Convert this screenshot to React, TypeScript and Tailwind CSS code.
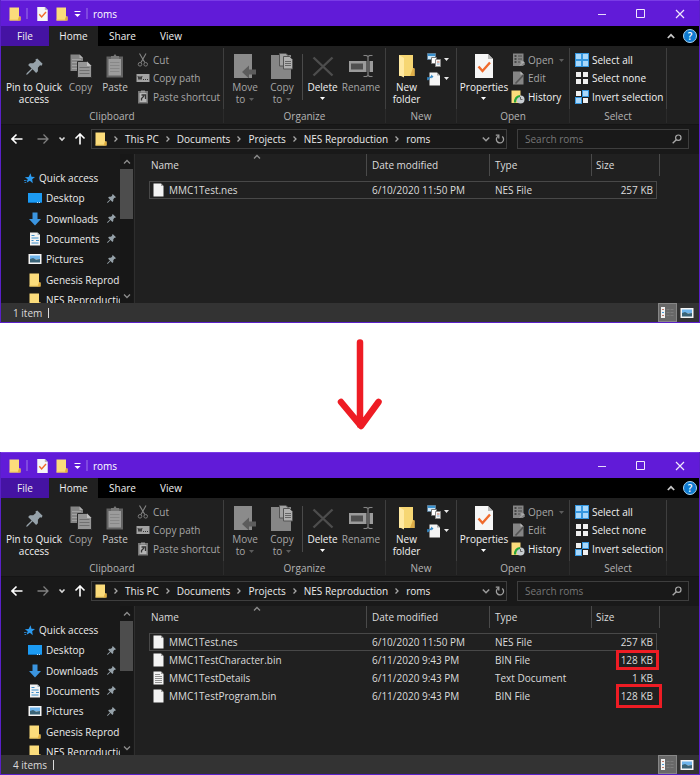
import React from "react";

type IconProps = { className?: string };

function Svg({ w, h, className, children }: { w: number; h: number; className?: string; children: React.ReactNode }) {
  return (
    <svg width={w} height={h} viewBox={`0 0 ${w} ${h}`} fill="none" aria-hidden="true" className={`block shrink-0 ${className ?? ""}`}>
      {children}
    </svg>
  );
}

/* ---------- shared icons ---------- */

function Pin({ size }: { size: number }) {
  return (
    <svg width={size} height={size} viewBox="0 0 16 16" aria-hidden="true" className="block shrink-0">
      <path
        d="M10.600 0.400 15.600 5.400 14.600 7.200 13.200 6.800 11.200 9.200 11.200 12.400 9.500 14 6.200 10.700 1.600 15.400 0.300 15.900 0.600 14.400 5.300 9.800 2 6.500 3.600 4.900 6.800 4.900 9.300 2.900 8.900 1.500Z"
        fill="#96a2aa"
      />
    </svg>
  );
}

function Folder({ className }: IconProps) {
  return (
    <Svg w={12} h={14} className={className}>
      <path d="M0.500 0.500H10v9h1.500v4H0.500Z" fill="#fbdc7b" />
      <path d="M10 9.500h1.500v4h-3Z" fill="#e0ac3d" />
      <path d="M0.500 12.500h9v1h-9Z" fill="#ecc65c" />
    </Svg>
  );
}

function CheckedPage({ w, h }: { w: number; h: number }) {
  return (
    <svg width={w} height={h} viewBox="0 0 18 24" fill="none" aria-hidden="true" className="block shrink-0">
      <path d="M0 0H13L18 5V24H0Z" fill="#f6f6f6" />
      <path d="M13 0 18 5H13Z" fill="#b9b9b9" />
      <path d="M3.500 12.500 7.500 17 15 8.500" stroke="#ef6a2c" strokeWidth="2.400" />
    </svg>
  );
}

function Caret({ className }: IconProps) {
  return (
    <Svg w={5} h={3} className={className}>
      <path d="M0 0H5L2.500 3Z" fill="currentColor" />
    </Svg>
  );
}

function Chevron({ dir, className }: { dir: "up" | "down" | "right"; className?: string }) {
  const d = dir === "up" ? "M1 5.500 4 2.500 7 5.500" : dir === "down" ? "M1 2.500 4 5.500 7 2.500" : "M2.500 1.500 5 4 2.500 6.500";
  return (
    <Svg w={8} h={8} className={className}>
      <path d={d} stroke="currentColor" strokeWidth="1.300" />
    </Svg>
  );
}

/* ---------- ribbon icons ---------- */

function CopyIcon() {
  return (
    <Svg w={22} h={24}>
      <path d="M0.500 0.500H9.500L13 4V17H0.500Z" fill="#858585" />
      <path d="M9.500 0.500V4H13Z" fill="#b0b0b0" />
      <path d="M2 5.500h9M2 8.500h9M2 11.500h9M2 14.500h9" stroke="#a2a2a2" />
      <path d="M7.500 7.500H17L21.500 12V23.500H7.500Z" fill="#969696" stroke="#2c2c2c" />
      <path d="M17 7.500V12H21.500Z" fill="#c2c2c2" />
      <path d="M9.500 13.500h10M9.500 16.500h10M9.500 19.500h10" stroke="#707070" />
    </Svg>
  );
}

function PasteIcon() {
  return (
    <Svg w={18} h={24}>
      <path d="M0.500 2.500h16.500v21H0.500Z" fill="#636363" />
      <path d="M2.500 5h12.500v16.500H2.500Z" fill="#9c9c9c" />
      <path d="M5 2h2.500L9 0l1.500 2H13v3H5Z" fill="#787878" />
      <path d="M4 8.500h9.500M4 11.500h9.500M4 14.500h9.500M4 17.500h9.500" stroke="#888" />
    </Svg>
  );
}

function CutIcon() {
  return (
    <Svg w={14} h={14}>
      <path d="M3.500 0.500 8.800 9.500M10 0.500 5 9.500" stroke="#858585" strokeWidth="1.100" />
      <circle cx="4" cy="11.300" r="1.800" stroke="#7b7b7b" />
      <circle cx="9.700" cy="11.300" r="1.800" stroke="#7b7b7b" />
    </Svg>
  );
}

function CopyPathIcon() {
  return (
    <Svg w={14} h={14}>
      <path d="M0.500 3h13v8H0.500Z" fill="#a3a3a3" />
      <path d="M2 5l1 3.500L4 5.500l1 3L6 5" stroke="#333" />
      <path d="M7 8.500h1M9 8.500h1M11 8.500h1" stroke="#333" />
    </Svg>
  );
}

function ShortcutIcon() {
  return (
    <Svg w={14} h={14}>
      <path d="M2 1h10v12.500H2Z" fill="#777" />
      <path d="M3.500 3h7v9h-7Z" fill="#b5b5b5" />
      <path d="M5 0.500h4v2H5Z" fill="#999" />
      <path d="M5.500 10.500V8.500L8 6M5.500 5h4v4" stroke="#333" strokeWidth="1.300" />
    </Svg>
  );
}

function MoveToIcon() {
  return (
    <Svg w={22} h={24}>
      <path d="M0 0h18v24H0Z" fill="#8b8b8b" />
      <path d="M8 18 15 11.500v4h7v5h-7v4Z" fill="#5c5c5c" />
    </Svg>
  );
}

function CopyToIcon() {
  return (
    <Svg w={22} h={26}>
      <path d="M0 2h20v24H0Z" fill="#868686" />
      <path d="M8.500 0.500h6.500l2.500 2.500v10h-9Z" fill="#a2a2a2" stroke="#555" />
      <path d="M12.500 3.500h6l3 3v9.500h-9Z" fill="#b0b0b0" stroke="#555" />
      <path d="M14 8.500h6M14 10.500h6M14 12.500h6" stroke="#666" />
    </Svg>
  );
}

function DeleteIcon() {
  return (
    <Svg w={22} h={24}>
      <path d="M1.500 3.500 20.500 21.500M20.500 3.500 1.500 21.500" stroke="#4d4d4d" strokeWidth="2.400" />
    </Svg>
  );
}

function RenameIcon() {
  return (
    <Svg w={24} h={24}>
      <path d="M0 7h24v11H0Z" fill="#9b9b9b" />
      <path d="M2 9.500h12v6H2Z" fill="#505050" />
      <path d="M14.500 1.500h3l1.500 1 1.500-1h3M14.500 22.500h3l1.500-1 1.500 1h3M19 2.500v19" stroke="#222" strokeWidth="3" />
      <path d="M14.500 1.500h3l1.500 1 1.500-1h3M14.500 22.500h3l1.500-1 1.500 1h3M19 2.500v19" stroke="#858585" strokeWidth="1.200" />
    </Svg>
  );
}

function NewFolderIcon() {
  return (
    <Svg w={16} h={24}>
      <path d="M0 1h14v14h1.500v7H0Z" fill="#f6d673" />
      <path d="M0 1l5 3v19.500L0 21Z" fill="#ffe9a2" />
      <path d="M14 14h1.500v8H11Z" fill="#dfae48" />
    </Svg>
  );
}

function NewItemIcon() {
  return (
    <Svg w={14} h={14}>
      <path d="M0.500 0.500h8v6h-8Z" fill="#cfe7f7" stroke="#5d7f99" />
      <path d="M1 1h7v2H1Z" fill="#3b93d0" />
      <path d="M4.500 4.500h5v6h-5Z" fill="#fff" stroke="#777" />
      <path d="M8.500 6.500h5v7h-5Z" fill="#f4f4f4" stroke="#888" />
      <path d="M10 9h2.500" stroke="#c06a52" />
      <path d="M10 11h2.500" stroke="#7aa7c7" />
    </Svg>
  );
}

function EasyAccessIcon() {
  return (
    <Svg w={14} h={14}>
      <path d="M2.500 0.500h7.500L13 3.500V13.500H2.500Z" fill="#f4f4f4" />
      <path d="M10 0.500v3h3Z" fill="#aaa" />
      <path d="M0 6h2.500M0.500 8C2 6 3 5 5 4.500" stroke="#3588c4" strokeWidth="1.300" />
      <path d="M4 2.500 6.500 4.500 4.500 6.500Z" fill="#3588c4" />
    </Svg>
  );
}

function OpenIcon() {
  return (
    <Svg w={14} h={14}>
      <path d="M2 0.500h10.500v12.500H2Z" fill="#858585" />
      <path d="M3.500 3h2M3.500 6h2M3.500 9h2" stroke="#333" strokeWidth="1.600" />
      <path d="M7 3h4M7 6h4M7 9h2" stroke="#4a4a4a" />
      <path d="M9 12.500 12.500 9M10 9h3v3" stroke="#bbb" />
    </Svg>
  );
}

function EditIcon() {
  return (
    <Svg w={14} h={14}>
      <path d="M2 0.500h7.500l3 3v10H2Z" fill="#858585" />
      <path d="M9.500 0.500v3h3Z" fill="#bbb" />
      <path d="M4.500 12.500 12.500 4" stroke="#555" strokeWidth="1.800" />
    </Svg>
  );
}

function HistoryIcon() {
  return (
    <Svg w={14} h={14}>
      <path d="M0.500 0.500h9v8h1v4.500h-10Z" fill="#fbdc7b" />
      <circle cx="9.500" cy="9.500" r="4" fill="#c9ced2" />
      <path d="M9.500 9.500V7M9.500 9.500h2" stroke="#666" />
      <path d="M4 12.500C4 8.500 5.500 6.500 9 6" stroke="#2aa53a" strokeWidth="2.200" />
    </Svg>
  );
}

function TilesIcon({ on }: { on: [boolean, boolean, boolean, boolean] }) {
  const spots = [
    [0, 0],
    [7, 0],
    [0, 7],
    [7, 7],
  ];
  return (
    <Svg w={14} h={14}>
      {spots.map(([x, y], i) =>
        on[i] ? (
          <g key={i}>
            <rect x={x} y={y} width="7" height="7" fill="#3597e0" />
            <rect x={x + 1} y={y + 1} width="5" height="5" fill="#a9d8fb" />
          </g>
        ) : (
          <rect key={i} x={x + 1} y={y + 1} width="5" height="5" fill="#f0f0f0" />
        )
      )}
    </Svg>
  );
}

/* ---------- sidebar icons ---------- */

function StarIcon() {
  return (
    <Svg w={11} h={11}>
      <path d="M6.500 0.300 7.500 3.700 11 4 8.200 6.200 8.800 10.200 5.800 7.700 2.500 9.800 3.700 6.300 0.800 4.300 4.600 3.900Z" fill="#2b9bf0" />
      <path d="M0 7.500h2.500M0.500 9.500h1.500" stroke="#2b77b5" />
    </Svg>
  );
}

function DesktopIcon() {
  return (
    <Svg w={14} h={14}>
      <path d="M0 2h14v10H0Z" fill="#1c9bf3" />
      <path d="M0 11h14v1H0Z" fill="#0e6fba" />
      <path d="M9 11.500h1M11 11.500h1" stroke="#bfe2fb" />
    </Svg>
  );
}

function DownloadIcon() {
  return (
    <Svg w={14} h={14}>
      <path d="M4.500 0.500h5v6.500H13L7 13.500 1 7h3.500Z" fill="#3b95e0" />
    </Svg>
  );
}

function DocumentIcon() {
  return (
    <Svg w={14} h={14}>
      <path d="M2 0.500h7.500l2.500 2.500v10.500H2Z" fill="#f2f2f2" />
      <path d="M3.500 3.500h3M3.500 6h7M3.500 8.500h2M8 8.500h3M3.500 11h7" stroke="#3d8fc9" strokeWidth="1.200" />
      <path d="M9.500 0.500v2.500H12Z" fill="#a5b5c0" />
    </Svg>
  );
}

function PictureIcon() {
  return (
    <Svg w={14} h={12}>
      <path d="M0.500 1h13v10H0.500Z" fill="#f5f5f5" />
      <path d="M2 2.500h10v3.500H2Z" fill="#6fb5ec" />
      <path d="M2 6 5 5l3 1.500 4-0.500v3.500H2Z" fill="#3a6478" />
    </Svg>
  );
}

function FileIcon({ lined }: { lined?: boolean }) {
  return (
    <Svg w={11} h={14}>
      <path d="M0.500 0.500h7.500l2.500 2.500v10.500h-10Z" fill="#f3f3f3" />
      <path d="M8 0.500v2.500h2.500Z" fill="#9d9d9d" />
      {lined && <path d="M2 3.500h5M2 5.500h7M2 7.500h7M2 9.500h7M2 11.500h7" stroke="#909090" />}
    </Svg>
  );
}

/* ---------- ribbon parts ---------- */

function BigButton({ icon, lines, width, tone, caret }: { icon: React.ReactNode; lines: string[]; width: string; tone: string; caret?: "below" | "inline" }) {
  return (
    <button type="button" className={`flex shrink-0 flex-col items-center gap-[3px] pt-1.5 leading-3 ${width} ${tone}`}>
      <span className="flex h-6 items-center justify-center">{icon}</span>
      <span className="flex flex-col items-center whitespace-nowrap">
        {lines.map((line, i) => (
          <span key={line} className="flex items-center gap-1">
            {line}
            {caret === "inline" && i === lines.length - 1 && <Caret className="text-[#5c5c5c]" />}
          </span>
        ))}
        {caret === "below" && <Caret className="mt-1 text-white" />}
      </span>
    </button>
  );
}

function SmallButton({ icon, text, tone, caret }: { icon: React.ReactNode; text: string; tone: string; caret?: boolean }) {
  return (
    <button type="button" className={`flex items-center gap-[3px] whitespace-nowrap ${tone}`}>
      {icon}
      {text}
      {caret && <Caret className="ml-0.5 text-[#5c5c5c]" />}
    </button>
  );
}

function Group({ label, width, children }: { label: string; width: string; children: React.ReactNode }) {
  return (
    <div role="group" aria-label={label} className={`flex shrink-0 flex-col pt-0.5 ${width}`}>
      <div className="flex h-[61px] border-r border-[#3f3f3f]">{children}</div>
      <div className="flex h-[14px] items-center justify-center border-r border-[#2b2b2b] text-[#b4b4b4]">{label}</div>
    </div>
  );
}

function Stack({ children }: { children: React.ReactNode }) {
  return <div className="grid h-[58px] auto-rows-fr pt-[3px]">{children}</div>;
}

function Ribbon() {
  const bright = "text-[#f2f2f2]";
  const dim = "text-[#a6a6a6]";
  return (
    <div className="flex h-[78px] overflow-hidden bg-[#202020]">
      <Group label="Clipboard" width="w-[223px]">
        <BigButton icon={<Pin size={17} />} lines={["Pin to Quick", "access"]} width="w-[66px]" tone={bright} />
        <BigButton icon={<CopyIcon />} lines={["Copy"]} width="w-[27px]" tone={dim} />
        <BigButton icon={<PasteIcon />} lines={["Paste"]} width="w-[42px]" tone="text-[#c8c8c8]" />
        <Stack>
          <SmallButton icon={<CutIcon />} text="Cut" tone={dim} />
          <SmallButton icon={<CopyPathIcon />} text="Copy path" tone={dim} />
          <SmallButton icon={<ShortcutIcon />} text="Paste shortcut" tone={dim} />
        </Stack>
      </Group>
      <Group label="Organize" width="w-[162px]">
        <BigButton icon={<MoveToIcon />} lines={["Move", "to"]} width="w-[42px]" tone={dim} caret="inline" />
        <BigButton icon={<CopyToIcon />} lines={["Copy", "to"]} width="w-[32px]" tone={dim} caret="inline" />
        <span className="mt-1.5 ml-1 h-[46px] w-px bg-[#4a4a4a]" />
        <BigButton icon={<DeleteIcon />} lines={["Delete"]} width="w-[39px]" tone={bright} caret="below" />
        <BigButton icon={<RenameIcon />} lines={["Rename"]} width="w-[38px]" tone={dim} />
      </Group>
      <Group label="New" width="w-[71px]">
        <BigButton icon={<NewFolderIcon />} lines={["New", "folder"]} width="w-[41px]" tone={bright} />
        <div className="flex flex-col gap-1 pt-1 text-[#e8e8e8]">
          <button type="button" aria-label="New item" className="flex h-[15px] items-center gap-[3px]">
            <NewItemIcon />
            <Caret />
          </button>
          <button type="button" aria-label="Easy access" className="flex h-[15px] items-center gap-[3px]">
            <EasyAccessIcon />
            <Caret />
          </button>
        </div>
      </Group>
      <Group label="Open" width="w-[113px]">
        <BigButton icon={<CheckedPage w={18} h={24} />} lines={["Properties"]} width="w-[54px]" tone={bright} caret="below" />
        <Stack>
          <SmallButton icon={<OpenIcon />} text="Open" tone={dim} caret />
          <SmallButton icon={<EditIcon />} text="Edit" tone={dim} />
          <SmallButton icon={<HistoryIcon />} text="History" tone={bright} />
        </Stack>
      </Group>
      <Group label="Select" width="w-[97px]">
        <div className="pl-[5px]">
          <Stack>
            <SmallButton icon={<TilesIcon on={[true, true, true, true]} />} text="Select all" tone={bright} />
            <SmallButton icon={<TilesIcon on={[false, false, false, false]} />} text="Select none" tone={bright} />
            <SmallButton icon={<TilesIcon on={[false, true, true, false]} />} text="Invert selection" tone={bright} />
          </Stack>
        </div>
      </Group>
    </div>
  );
}

/* ---------- window parts ---------- */

function TitleBar() {
  return (
    <div className="flex h-[26px] items-center border-t border-[#7a3be6] bg-[#611bd8] text-white">
      <div className="flex flex-1 items-center pl-2">
        <Folder />
        <span className="mx-[5px] h-[11px] w-0.5 bg-[#7f48e0]" />
        <button type="button" aria-label="Properties" className="ml-1">
          <CheckedPage w={11} h={14} />
        </button>
        <button type="button" aria-label="New folder" className="ml-2">
          <Folder />
        </button>
        <button type="button" aria-label="Customize Quick Access Toolbar" className="ml-1.5 pt-0.5">
          <Svg w={7} h={7}>
            <path d="M0.500 0.500h6" stroke="#fff" />
            <path d="M0.500 3h6L3.500 6Z" fill="#fff" />
          </Svg>
        </button>
        <span className="mx-[5px] h-[11px] w-0.5 bg-[#7f48e0]" />
        <h2>roms</h2>
      </div>
      <button type="button" aria-label="Minimize" className="flex w-[39px] justify-center">
        <Svg w={10} h={10}>
          <path d="M1 5.500h8" stroke="#e6d9fb" />
        </Svg>
      </button>
      <button type="button" aria-label="Maximize" className="flex w-[39px] justify-center">
        <Svg w={10} h={10}>
          <path d="M0.500 0.500h8v8h-8Z" stroke="#f0e8fd" />
        </Svg>
      </button>
      <button type="button" aria-label="Close" className="flex w-[39px] justify-center">
        <Svg w={10} h={10}>
          <path d="M1 1 9 9M9 1 1 9" stroke="#f0e8fd" strokeWidth="1.200" />
        </Svg>
      </button>
    </div>
  );
}

function Tabs() {
  return (
    <div className="flex h-5 items-stretch bg-black text-[#f0f0f0]">
      <button type="button" className="w-[48px] bg-[#4513a3]">File</button>
      <button type="button" className="w-[49px] bg-[#202020]">Home</button>
      <button type="button" className="w-[49px]">Share</button>
      <button type="button" className="w-[48px]">View</button>
      <span className="flex-1" />
      <button type="button" aria-label="Collapse the Ribbon" className="mr-2 text-[#c9c9c9]">
        <Svg w={8} h={8}>
          <path d="M0.800 6 4 2.800 7.200 6" stroke="currentColor" strokeWidth="1.700" />
        </Svg>
      </button>
      <button type="button" aria-label="Help" className="mr-0.5 flex items-center">
        <span className="flex size-3.5 items-center justify-center rounded-full border border-[#a9d4f2] bg-[#0f7ad0] font-semibold text-white">?</span>
      </button>
    </div>
  );
}

const crumbs = ["This PC", "Documents", "Projects", "NES Reproduction", "roms"];

function AddressBar() {
  return (
    <div className="flex h-[30px] items-center border-t border-[#151515] bg-[#191919] pr-2.5 pb-px pl-[10px]">
      <button type="button" aria-label="Back">
        <Svg w={12} h={12}>
          <path d="M11.500 6H1.500M5.500 1.500 1 6l4.500 4.500" stroke="#fff" strokeWidth="1.600" />
        </Svg>
      </button>
      <button type="button" aria-label="Forward" className="ml-[14px]">
        <Svg w={12} h={12}>
          <path d="M0.500 6h10M6.500 1.500 11 6l-4.500 4.500" stroke="#808080" strokeWidth="1.300" />
        </Svg>
      </button>
      <button type="button" aria-label="Recent locations" className="ml-[9px]">
        <Svg w={8} h={8}>
          <path d="M1.500 2.500 4 5l2.500-2.500" stroke="#d8d8d8" strokeWidth="1.600" />
        </Svg>
      </button>
      <button type="button" aria-label="Up" className="ml-2">
        <Svg w={12} h={12}>
          <path d="M6 11.500V1.500M1.500 5.500 6 1l4.500 4.500" stroke="#fff" strokeWidth="1.600" />
        </Svg>
      </button>
      <nav aria-label="Address" className="ml-[5px] flex h-5 min-w-0 flex-1 items-center border border-[#3e3e3e] pr-px pl-[3px] whitespace-nowrap text-[#ececec]">
        <Folder />
        {crumbs.map((crumb) => (
          <React.Fragment key={crumb}>
            <Chevron dir="right" className="mx-[5px] text-[#a8a8a8]" />
            <a href="#">{crumb}</a>
          </React.Fragment>
        ))}
        <span className="flex-1" />
        <button type="button" aria-label="Previous locations" className="mr-[5px] text-[#9a9a9a]">
          <Svg w={8} h={8}>
            <path d="M0.800 2.500 4 5.700l3.200-3.200" stroke="currentColor" strokeWidth="1.600" />
          </Svg>
        </button>
        <button type="button" aria-label="Refresh">
          <Svg w={10} h={10}>
            <path d="M3.200 2.200A3.600 3.600 0 1 0 7.200 2.500" stroke="#a0a0a0" strokeWidth="1.300" />
            <path d="M0.800 1.200h3v3.200" stroke="#a0a0a0" strokeWidth="1.300" />
          </Svg>
        </button>
      </nav>
      <div className="ml-[10px] flex h-5 w-[172px] shrink-0 items-center border border-[#3e3e3e] pr-1.5 pl-[7px]">
        <input type="search" aria-label="Search roms" placeholder="Search roms" className="min-w-0 flex-1 bg-transparent text-white outline-none placeholder:text-[#777]" />
        <Svg w={10} h={10}>
          <circle cx="6.300" cy="3.700" r="2.700" stroke="#a8a8a8" strokeWidth="1.200" />
          <path d="M4.300 5.700 0.700 9.300" stroke="#a8a8a8" strokeWidth="1.400" />
        </Svg>
      </div>
    </div>
  );
}

const places = [
  { name: "Desktop", icon: <DesktopIcon />, pinned: true },
  { name: "Downloads", icon: <DownloadIcon />, pinned: true },
  { name: "Documents", icon: <DocumentIcon />, pinned: true },
  { name: "Pictures", icon: <PictureIcon />, pinned: true },
  { name: "Genesis Reproduction", icon: <Folder className="mx-px" />, pinned: false },
  { name: "NES Reproduction", icon: <Folder className="mx-px" />, pinned: false },
];

function Sidebar() {
  return (
    <div className="flex w-[134px] shrink-0 overflow-hidden border-r border-[#2e2e2e] bg-[#191919] text-[#ececec]">
      <nav aria-label="Quick access" className="h-full w-[119px] shrink-0 overflow-hidden">
        <ul className="mt-[14px] grid h-[142px] auto-rows-fr">
          <li className="flex items-center">
            <a href="#" className="flex items-center gap-1 pl-[23px]">
              <StarIcon />
              Quick access
            </a>
          </li>
          {places.map((place) => (
            <li key={place.name} className="flex items-center overflow-hidden">
              <a href="#" className="flex flex-1 items-center gap-1 pl-[27px] whitespace-nowrap">
                {place.icon}
                {place.name}
              </a>
              {place.pinned && (
                <span className="pr-1">
                  <Pin size={9} />
                </span>
              )}
            </li>
          ))}
        </ul>
      </nav>
      <div className="flex w-[13px] shrink-0 flex-col items-center bg-[#171717] text-[#8c8c8c]">
        <button type="button" aria-label="Scroll up" className="flex h-[15px] items-center">
          <Chevron dir="up" />
        </button>
        <div className="h-[50px] w-[13px] bg-[#4d4d4d]" />
        <span className="flex-1" />
        <button type="button" aria-label="Scroll down" className="flex h-[15px] items-center">
          <Chevron dir="down" />
        </button>
      </div>
    </div>
  );
}

type FileRow = { name: string; modified: string; type: string; size: string; lined?: boolean; mark?: "narrow" | "wide" };

const headings = [
  { text: "Name", width: "w-[218px]", pad: "pl-0.5" },
  { text: "Date modified", width: "w-[123px]", pad: "pl-[5px]" },
  { text: "Type", width: "w-[102px]", pad: "pl-[5px]" },
  { text: "Size", width: "w-[65px]", pad: "pl-1 -mr-[3px]" },
];

function FileTable({ rows }: { rows: FileRow[] }) {
  return (
    <div className="min-w-0 flex-1 bg-[#202020] pl-[14px]">
      <table className="w-[508px] table-fixed border-separate border-spacing-0 text-left text-[#dcdcdc]">
        <thead>
          <tr>
            {headings.map((heading, i) => (
              <th key={heading.text} scope="col" className={`relative h-[27px] p-0 pb-[5px] align-top font-normal ${heading.width}`}>
                <div className={`flex h-[22px] items-center border-r border-[#4a4a4a] ${heading.pad}`}>{heading.text}</div>
                {i === 0 && <Chevron dir="up" className="absolute -top-px left-[104px] text-[#8c8c8c]" />}
              </th>
            ))}
          </tr>
        </thead>
        <tbody>
          {rows.map((row, i) => {
            const edge = i === 0 ? "border-y border-[#484848]" : "";
            return (
              <tr key={row.name} className="leading-4">
                <td className={`h-[18px] p-0 ${edge} ${i === 0 ? "border-l pl-[3px]" : "pl-1"}`}>
                  <span className="flex items-center gap-[5px]">
                    <FileIcon lined={row.lined} />
                    {row.name}
                  </span>
                </td>
                <td className={`p-0 pl-[5px] ${edge}`}>{row.modified}</td>
                <td className={`p-0 pl-[5px] ${edge}`}>{row.type}</td>
                <td className={`relative p-0 text-right ${edge} ${i === 0 ? "border-r pr-[3px]" : "pr-1"}`}>
                  {row.size}
                  {row.mark === "narrow" && <span className="absolute -top-px -right-0.5 h-5 w-[43px] border-[3px] border-[#ee1c24]" />}
                  {row.mark === "wide" && <span className="absolute -top-[3px] -right-[5px] h-6 w-[46px] border-[3px] border-[#ee1c24]" />}
                </td>
              </tr>
            );
          })}
        </tbody>
      </table>
    </div>
  );
}

function StatusBar({ text }: { text: string }) {
  return (
    <div className="flex h-[19px] items-center bg-[#333] text-[#dcdcdc]">
      <span className="pl-3">{text}</span>
      <span className="ml-1.5 h-2.5 w-px bg-[#dcdcdc]" />
      <span className="flex-1" />
      <button type="button" aria-label="Details view" className="flex h-[19px] w-[19px] items-center justify-center border border-[#868686] bg-[#686868]">
        <Svg w={13} h={11}>
          <path d="M0 0h4v11H0Z" fill="#f2f2f2" />
          <path d="M1 2.500h2M1 8.500h2" stroke="#c07a6a" />
          <path d="M1 5.500h2" stroke="#4a9ad6" />
          <path d="M5.500 2.500h3M9.500 2.500h3M5.500 5.500h3M9.500 5.500h3M5.500 8.500h3M9.500 8.500h3" stroke="#7c7c7c" />
        </Svg>
      </button>
      <button type="button" aria-label="Large icons view" className="mr-[5px] ml-[3px]">
        <PictureIcon />
      </button>
    </div>
  );
}

function ExplorerWindow({ rows, status }: { rows: FileRow[]; status: string }) {
  return (
    <section aria-label="roms" className="flex flex-col border-x border-b border-[#5a20c8]">
      <TitleBar />
      <Tabs />
      <Ribbon />
      <AddressBar />
      <div className="flex h-[149px]">
        <Sidebar />
        <FileTable rows={rows} />
      </div>
      <StatusBar text={status} />
    </section>
  );
}

const before: FileRow[] = [{ name: "MMC1Test.nes", modified: "6/10/2020 11:50 PM", type: "NES File", size: "257 KB" }];

const after: FileRow[] = [
  ...before,
  { name: "MMC1TestCharacter.bin", modified: "6/11/2020 9:43 PM", type: "BIN File", size: "128 KB", mark: "narrow" },
  { name: "MMC1TestDetails", modified: "6/11/2020 9:43 PM", type: "Text Document", size: "1 KB", lined: true },
  { name: "MMC1TestProgram.bin", modified: "6/11/2020 9:43 PM", type: "BIN File", size: "128 KB", mark: "wide" },
];

export default function App() {
  return (
    <main className="bg-white font-['Open_Sans','Noto_Sans',sans-serif] text-[10px] leading-[14px]">
      <ExplorerWindow rows={before} status="1 item" />
      <div className="flex justify-center pt-3 pb-5 pl-5">
        <svg width="60" height="97" viewBox="0 0 60 97" fill="none" aria-hidden="true" className="block">
          <path d="M30 7.500V90M11 67 31 91 48.500 67" stroke="#ee1c24" strokeWidth="6.500" strokeLinecap="round" strokeLinejoin="round" />
        </svg>
      </div>
      <ExplorerWindow rows={after} status="4 items" />
    </main>
  );
}
